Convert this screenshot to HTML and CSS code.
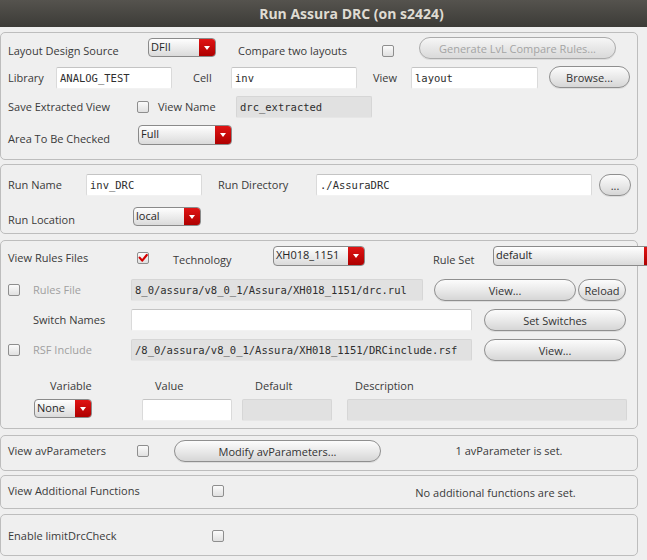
FILE: index.html
```html
<!DOCTYPE html>
<html>
<head>
<meta charset="utf-8">
<title>Run Assura DRC</title>
<link rel="stylesheet" href="styles.css">
</head>
<body>
<div class="titlebar"><span class="title">Run Assura DRC (on s2424)</span></div>
<main class="main">
  <section class="group g1">
    <div class="row">
      <span class="lbl low w140">Layout Design Source</span>
      <div class="combo w68 t1 h19"><span class="cv">DFII</span><span class="arrow"></span></div>
      <span class="lbl low ml22 w144">Compare two layouts</span>
      <span class="chk t8"></span>
      <button class="btn dis ml25 w197">Generate LvL Compare Rules...</button>
    </div>
    <div class="row rg8">
      <span class="lbl w48">Library</span>
      <div class="inp w116">ANALOG_TEST</div>
      <span class="lbl ml21 w38">Cell</span>
      <div class="inp w126">inv</div>
      <span class="lbl ml16 w38">View</span>
      <div class="inp w127">layout</div>
      <button class="btn ml11 w81 up1">Browse...</button>
    </div>
    <div class="row rg7">
      <span class="lbl w129">Save Extracted View</span>
      <span class="chk"></span>
      <span class="lbl ml9 w78">View Name</span>
      <div class="inp off w136">drc_extracted</div>
    </div>
    <div class="row rg7">
      <span class="lbl low w130">Area To Be Checked</span>
      <div class="combo w94"><span class="cv">Full</span><span class="arrow"></span></div>
    </div>
  </section>

  <section class="group g2">
    <div class="row">
      <span class="lbl w78">Run Name</span>
      <div class="inp w116">inv_DRC</div>
      <span class="lbl ml16 w98">Run Directory</span>
      <div class="inp w276">./AssuraDRC</div>
      <button class="btn ml7 w32">...</button>
    </div>
    <div class="row rg10">
      <span class="lbl low w125">Run Location</span>
      <div class="combo w68 t1 h19"><span class="cv">local</span><span class="arrow"></span></div>
    </div>
  </section>

  <section class="group g3">
    <div class="row h20">
      <span class="lbl t5 w129">View Rules Files</span>
      <span class="chk on t6"><svg width="10" height="10" viewBox="0 0 10 10"><path d="M1.6 4.6 L4.2 7.6 L8.8 2" fill="none" stroke="#d40000" stroke-width="2.2" stroke-linecap="round" stroke-linejoin="round"/></svg></span>
      <span class="lbl low ml24 w100">Technology</span>
      <div class="combo w92"><span class="cv">XH018_1151</span><span class="arrow"></span></div>
      <span class="lbl low ml68 w60">Rule Set</span>
      <div class="combo w168"><span class="cv">default</span><span class="arrow"></span></div>
    </div>
    <div class="row rg13">
      <span class="chk"></span>
      <span class="lbl dim ml13 w98">Rules File</span>
      <div class="inp off w292">8_0/assura/v8_0_1/Assura/XH018_1151/drc.rul</div>
      <button class="btn ml11 w142">View...</button>
      <button class="btn ml2 w48">Reload</button>
    </div>
    <div class="row rg8">
      <span class="lbl ml25 w98">Switch Names</span>
      <div class="inp w341"></div>
      <button class="btn ml12 w142">Set Switches</button>
    </div>
    <div class="row rg8">
      <span class="chk"></span>
      <span class="lbl dim ml13 w98">RSF Include</span>
      <div class="inp off w341">/8_0/assura/v8_0_1/Assura/XH018_1151/DRCinclude.rsf</div>
      <button class="btn ml12 w142">View...</button>
    </div>
    <div class="row hdr rg18">
      <span class="lbl t0 ml42 w105">Variable</span>
      <span class="lbl t0 w100">Value</span>
      <span class="lbl t0 w100">Default</span>
      <span class="lbl t0">Description</span>
    </div>
    <div class="row rg6">
      <div class="combo ml26 w58 h19"><span class="cv">None</span><span class="arrow"></span></div>
      <div class="inp ml50 w90"></div>
      <div class="inp off ml10 w90"></div>
      <div class="inp off ml15 w280"></div>
    </div>
  </section>

  <section class="group g4">
    <div class="row">
      <span class="lbl w129">View avParameters</span>
      <span class="chk"></span>
      <button class="btn ml25 w207">Modify avParameters...</button>
      <span class="note">1 avParameter is set.</span>
    </div>
  </section>

  <section class="group g5">
    <div class="row">
      <span class="lbl w204">View Additional Functions</span>
      <span class="chk"></span>
      <span class="note ml130 t6">No additional functions are set.</span>
    </div>
  </section>

  <section class="group g6">
    <div class="row">
      <span class="lbl w204">Enable limitDrcCheck</span>
      <span class="chk"></span>
    </div>
  </section>
</main>
</body>
</html>
```
FILE: styles.css
```css
* { box-sizing: border-box; }
html, body { margin: 0; padding: 0; }
body {
  width: 647px;
  height: 560px;
  overflow: hidden;
  background: #efefef;
  font-family: "Open Sans", "Noto Sans", sans-serif;
  font-size: 11px;
  color: #3c3c3c;
}

.titlebar {
  height: 27px;
  background: linear-gradient(#55534e, #3c3b37);
  display: flex;
  align-items: center;
  justify-content: center;
  padding-left: 56px;
}
.title { color: #dfdbd2; font-weight: 700; font-size: 14px; }

.main { display: flex; flex-direction: column; width: 638px; }

.group {
  border: 1px solid #bdbdbd;
  border-radius: 5px;
  padding-left: 7px;
  display: flex;
  flex-direction: column;
}
.g1 { margin-top: 5px; padding-top: 4px; padding-bottom: 12px; }
.g2 { margin-top: 4px; padding-top: 9px; padding-bottom: 5px; }
.g3 { margin-top: 6px; padding-top: 5px; padding-bottom: 7px; }
.g4 { margin-top: 6px; padding-top: 4px; padding-bottom: 8px; }
.g5 { margin-top: 4px; padding-top: 4px; padding-bottom: 6px; }
.g6 { margin-top: 5px; padding-top: 10px; padding-bottom: 8px; }

.row { display: flex; align-items: flex-start; height: 22px; flex-shrink: 0; }
.row.h20 { height: 20px; }
.row.hdr { height: 14px; }
.rg6 { margin-top: 6px; }
.rg7 { margin-top: 7px; }
.rg8 { margin-top: 8px; }
.rg10 { margin-top: 10px; }
.rg13 { margin-top: 13px; }
.rg18 { margin-top: 18px; }

.lbl { line-height: 14px; margin-top: 4px; white-space: nowrap; flex-shrink: 0; color: #3a3a3a; }
.lbl.low { margin-top: 7px; }
.lbl.dim { color: #a0a0a0; }
.note { flex: 1; text-align: center; line-height: 14px; margin-top: 4px; color: #3a3a3a; white-space: nowrap; }

.inp {
  height: 22px;
  flex-shrink: 0;
  background: #fff;
  border: 1px solid #dadada;
  border-top-color: #c4c4c4;
  border-bottom-color: #f2f2f2;
  border-radius: 2px;
  padding-left: 3px;
  font-family: "DejaVu Sans Mono", monospace;
  font-size: 10.5px;
  line-height: 20px;
  color: #2e2e2e;
  white-space: nowrap;
  overflow: hidden;
}
.inp.off { background: #e1e1e1; border-color: #d6d6d6; border-bottom-color: #e6e6e6; }

.btn {
  height: 22px;
  flex-shrink: 0;
  margin-top: 0;
  padding: 0;
  border: 1px solid #8f8f8f;
  border-radius: 11px;
  background: linear-gradient(#fcfcfc, #e8e8e8 55%, #d6d6d6);
  box-shadow: 0 1px 0 rgba(0,0,0,0.08);
  font-family: "Open Sans", "Noto Sans", sans-serif;
  font-size: 11px;
  color: #333;
  display: flex;
  align-items: center;
  justify-content: center;
}
.btn.dis { color: #a4a4a4; border-color: #ababab; background: linear-gradient(#f6f6f6, #e6e6e6 55%, #dadada); }
.up1 { margin-top: -1px; }

.combo {
  display: flex;
  height: 20px;
  flex-shrink: 0;
  border: 1px solid #8a8a8a;
  border-radius: 4px;
  background: linear-gradient(#fefefe, #e9e9e9 60%, #dadada);
  overflow: hidden;
}
.combo.h19 { height: 19px; }
.combo .cv { flex: 1; padding-left: 2px; line-height: 16px; color: #262626; white-space: nowrap; }
.combo .arrow {
  width: 16px;
  background: linear-gradient(#e01414, #ae0000);
  display: flex;
  align-items: center;
  justify-content: center;
}
.combo .arrow::after {
  content: "";
  border-left: 3.5px solid transparent;
  border-right: 3.5px solid transparent;
  border-top: 4px solid #fff;
}

.chk {
  width: 12px;
  height: 12px;
  flex-shrink: 0;
  margin-top: 5px;
  border: 1px solid #8e8e8e;
  border-radius: 2px;
  background: linear-gradient(#fbfbfb, #e0e0e0);
  display: flex;
  align-items: center;
  justify-content: center;
}
.chk svg { display: block; }

.t0 { margin-top: 0; }
.t1 { margin-top: 1px; }
.t5 { margin-top: 5px; }
.t6 { margin-top: 6px; }
.t8 { margin-top: 8px; }

.ml2 { margin-left: 2px; }
.ml7 { margin-left: 7px; }
.ml9 { margin-left: 9px; }
.ml10 { margin-left: 10px; }
.ml11 { margin-left: 11px; }
.ml12 { margin-left: 12px; }
.ml13 { margin-left: 13px; }
.ml15 { margin-left: 15px; }
.ml16 { margin-left: 16px; }
.ml21 { margin-left: 21px; }
.ml22 { margin-left: 22px; }
.ml24 { margin-left: 24px; }
.ml25 { margin-left: 25px; }
.ml26 { margin-left: 26px; }
.ml42 { margin-left: 42px; }
.ml50 { margin-left: 50px; }
.ml68 { margin-left: 68px; }
.ml130 { margin-left: 130px; }

.w32 { width: 32px; }
.w38 { width: 38px; }
.w48 { width: 48px; }
.w58 { width: 58px; }
.w60 { width: 60px; }
.w68 { width: 68px; }
.w78 { width: 78px; }
.w81 { width: 81px; }
.w90 { width: 90px; }
.w92 { width: 92px; }
.w94 { width: 94px; }
.w98 { width: 98px; }
.w100 { width: 100px; }
.w105 { width: 105px; }
.w116 { width: 116px; }
.w125 { width: 125px; }
.w126 { width: 126px; }
.w127 { width: 127px; }
.w129 { width: 129px; }
.w130 { width: 130px; }
.w136 { width: 136px; }
.w140 { width: 140px; }
.w142 { width: 142px; }
.w144 { width: 144px; }
.w168 { width: 168px; }
.w197 { width: 197px; }
.w204 { width: 204px; }
.w207 { width: 207px; }
.w276 { width: 276px; }
.w280 { width: 280px; }
.w292 { width: 292px; }
.w341 { width: 341px; }
```
